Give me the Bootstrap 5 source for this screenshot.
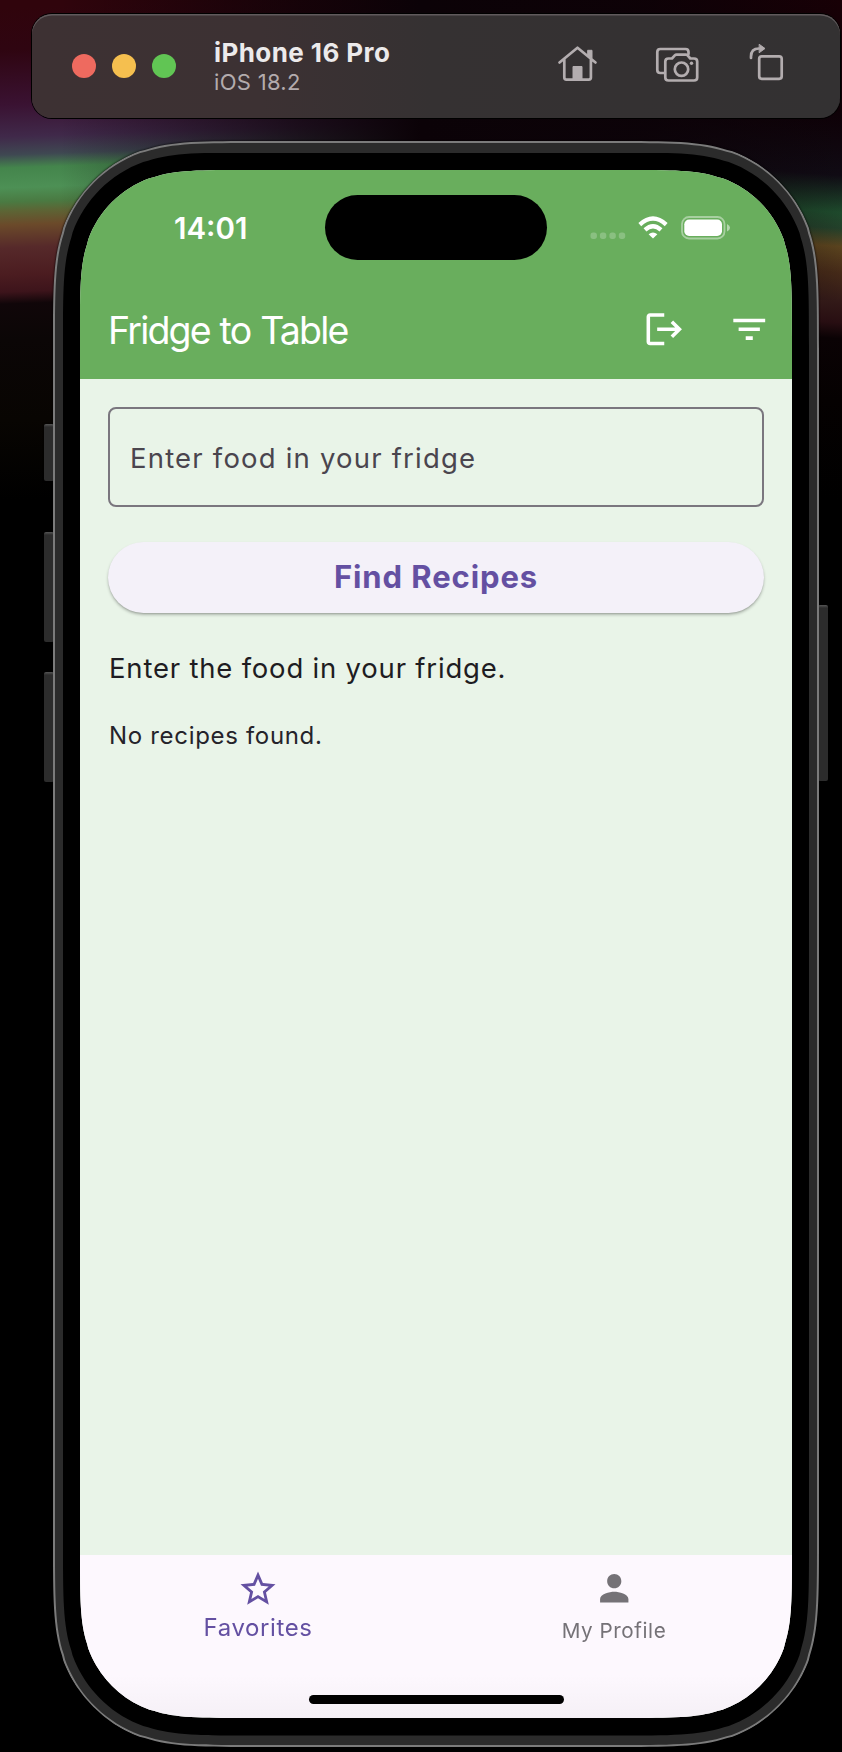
<!DOCTYPE html>
<html lang="en">
<head>
<meta charset="utf-8">
<meta name="viewport" content="width=device-width, initial-scale=1">
<title>Fridge to Table</title>
<link href="https://cdn.jsdelivr.net/npm/bootstrap@5.3.0/dist/css/bootstrap.min.css" rel="stylesheet">
<style>
body{width:842px;height:1752px;overflow:hidden;font-family:Inter,sans-serif;position:relative;
 background:
  linear-gradient(to right,rgba(11,2,7,0) 60px,rgba(11,2,7,.7) 300px,#0b0207 421px) 0 0/421px 300px no-repeat,
  linear-gradient(to left,rgba(11,2,7,0) 0,rgba(11,2,7,.8) 200px,#0b0207 421px) 421px 0/421px 300px no-repeat,
  linear-gradient(178deg,#30040c 7px,#2f0511 50px,#3a1232 105px,#40294a 137px,#3f4852 155px,#44854c 168px,#4d9055 188px,#4a7a42 202px,#5c6535 211px,#6b4a2a 225px,#56292a 248px,#4b1c20 275px,#3d141b 292px,#100609 304px,#0b0606 340px,#080502 420px,#000 500px) 0 0/421px 500px no-repeat,
  linear-gradient(184deg,#180006 0,#0e0006 110px,#100b14 175px,#1e4a2c 212px,#23402a 228px,#5a431e 246px,#452a18 272px,#331a18 300px,#280e12 322px,#0a0204 338px,#050101 400px,#000 500px) 421px 0/421px 500px no-repeat,
  #000}
.sim-bar{width:808px;height:104px;margin:14px 0 0 32px;border-radius:20px;padding:0 54px 0 40px;
 background:linear-gradient(to right,#3d3133 0,#3c3133 230px,#353132 400px,#333132 100%);
 box-shadow:0 0 0 1px #000,inset 0 1.5px 0 #605a5c}
.light{width:24px;height:24px;border-radius:50%}
.l-close{background:#ee6a5f}.l-min{background:#f5bf4f}.l-max{background:#61c554}
.sim-text{margin-left:38px;padding-top:2px}
.sim-name{font-size:26px;line-height:30px;font-weight:700;color:#eceaeb;letter-spacing:.42px}
.sim-os{font-size:22px;line-height:28px;color:#b3abad;letter-spacing:.3px}
.device{width:766px;height:1606px;margin:23px 0 0 53px;position:relative;filter:drop-shadow(0 0 1px #000)}
.side-key{position:absolute;background:linear-gradient(#555 0,#2c2c2c 3px);width:10px;border-radius:2px}
.edge{background:#7b7b7b;padding:2px;position:relative;border-radius:137px}
.band{background:#2b2b2b;padding:9.5px 8px}
.bezel{background:#000;padding:17.5px 17px}
.app{width:712px;height:1548px;background:#e9f4e8}
.status{height:109px;padding:0 60px 0 94px}
.clock{font-size:29.5px;line-height:36px;font-weight:600;width:151px;margin-top:40px}
.island{width:222px;height:65.5px;border-radius:33px;background:#000;margin-top:24.5px}
.status-icons{margin-top:40px}
.top-green{background:#69ae5d;color:#fff;height:209px}
.appbar{height:100px;padding:0 21.5px 0 28px}
.app-title{font-size:37.5px;line-height:48px;letter-spacing:-1.8px;word-spacing:1px;font-weight:400;padding-top:3px}
.bar-icons{gap:42.5px}
.content{height:1176px;padding:28px 28px 0}
.food-input{height:100px;border:2px solid #7a767e;border-radius:8px;background:transparent;padding:1px 20px 0;font-size:27.5px;letter-spacing:1.2px;color:#4a454e}
.food-input::placeholder{color:#4a454e;opacity:1}
.find{height:71px;margin-top:35px;border-radius:36px;background:#f4f1f9;border:0;color:#6450a2;font-size:31px;font-weight:650;letter-spacing:.9px;padding:0 0 2px;line-height:66px;box-shadow:0 2px 3px rgba(0,0,0,.25),0 1px 1px rgba(0,0,0,.08)}
.hint{font-size:27.5px;line-height:40px;margin:35px 0 0 1px;letter-spacing:.8px;color:#1e1c22}
.none{font-size:24px;line-height:34px;margin:31px 0 0 1px;letter-spacing:.68px;color:#25232a}
.tabs{height:163px;background:linear-gradient(#fdf8fe 0,#fdf8fe 120px,#f5f0f6 100%);position:relative}
.tab-star{margin-top:12.500px}
.tab-person{margin-top:12px}
.tab-a{font-size:24px;line-height:30px;color:#6450a2;letter-spacing:.6px;margin-top:3px}
.tab-b{font-size:20.7px;line-height:30px;color:#757277;letter-spacing:.55px;margin-top:6px}
.home-line{position:absolute;left:228.5px;top:140px;width:255px;height:9px;border-radius:5px;background:#000}
svg{display:block;flex:none}
</style>
</head>
<body>
<header class="sim-bar d-flex align-items-center">
 <div class="d-flex gap-3">
  <span class="light l-close"></span><span class="light l-min"></span><span class="light l-max"></span>
 </div>
 <div class="sim-text me-auto">
  <div class="sim-name">iPhone 16 Pro</div>
  <div class="sim-os">iOS 18.2</div>
 </div>
 <svg width="236" height="50" viewBox="550 41 236 50" fill="none" stroke="#b3adaf" stroke-width="2.7" stroke-linejoin="round" stroke-linecap="round">
  <path d="M559.5 62.500 577.500 47.700 595.500 62.500M564.300 59.500V77.500Q564.300 79.600 566.400 79.600H588.800Q590.900 79.600 590.900 77.500V59.500"/>
  <path d="M573 80V66.500H582V80Z" fill="#b3adaf" stroke-width="1"/><path d="M588 50.300H592V58.500L588 55.500Z" fill="#b3adaf" stroke-width="1"/>
  <path d="M664 73H660.300Q657.300 73 657.300 70V52Q657.300 49 660.300 49H685.500Q688.500 49 688.500 52V54"/>
  <path d="M668.500 58.500H672L674.800 55.400Q675.500 54.600 676.600 54.600H685.800Q686.900 54.600 687.600 55.400L690.300 58.500H694Q697.200 58.500 697.200 61.500V77.500Q697.200 80.500 694 80.500H668.500Q665.300 80.500 665.300 77.500V61.500Q665.300 58.500 668.500 58.500Z"/>
  <circle cx="681.500" cy="69.200" r="6.700"/><circle cx="691.500" cy="63.300" r="1.700" fill="#b3adaf" stroke="none"/>
  <rect x="759.200" y="56.300" width="22.500" height="22.500" rx="2.500"/>
  <path d="M751 58V56.500Q751 48.500 759 48.500"/><path d="M759.500 44.500 765 48.500 759.500 52.500Z" fill="#b3adaf" stroke-width="1"/>
 </svg>
</header>

<main class="device">
 <span class="side-key" style="left:-9px;top:283px;height:57px"></span>
 <span class="side-key" style="left:-9px;top:391px;height:110px"></span>
 <span class="side-key" style="left:-9px;top:531px;height:110px"></span>
 <span class="side-key" style="left:765px;top:464px;height:176px"></span>
 <div class="edge" data-corner="137"><div class="band" data-corner="135"><div class="bezel" data-corner="127">
  <div class="app d-flex flex-column" data-corner="110">
   <div class="top-green">
    <div class="status d-flex align-items-start">
     <div class="clock">14:01</div>
     <div class="island"></div>
     <svg class="status-icons ms-auto" width="142" height="36" viewBox="590 210 142 36" fill="#fff">
      <g opacity=".22"><rect x="590.500" y="232.500" width="6.400" height="6.400" rx="2.600"/><rect x="599.900" y="232.500" width="6.400" height="6.400" rx="2.600"/><rect x="609.400" y="232.500" width="6.400" height="6.400" rx="2.600"/><rect x="618.800" y="232.500" width="6.400" height="6.400" rx="2.600"/></g>
      <g fill="none" stroke="#fff" stroke-width="4.200"><path d="M639.800 224.600Q653 212.500 666.200 224.600"/><path d="M645 229.900Q653 222.500 661 229.900"/></g>
      <path d="M648.600 234.300Q653 230.600 657.400 234.300L653 238.600Z"/>
      <rect x="682" y="217" width="42.500" height="21.500" rx="7" fill="none" stroke="#fff" stroke-opacity=".42" stroke-width="1.800"/>
      <rect x="684.300" y="219.500" width="37.700" height="16.500" rx="4.800"/><path d="M727 224Q730 225.500 730 227.700T727 231.500Z" opacity=".5"/>
     </svg>
    </div>
    <div class="appbar d-flex align-items-center">
     <div class="app-title">Fridge to Table</div>
     <div class="bar-icons ms-auto d-flex">
      <svg width="42.500" height="42.500" viewBox="0 0 24 24" fill="#fff"><path d="M17 7l-1.410 1.410L18.170 11H8v2h10.170l-2.580 2.580L17 17l5-5zM4 5h8V3H4c-1.100 0-2 .9-2 2v14c0 1.100.9 2 2 2h8v-2H4V5z"/></svg>
      <svg width="42.500" height="42.500" viewBox="0 0 24 24" fill="#fff"><path d="M10 18h4v-2h-4v2zM3 6v2h18V6H3zm3 7h12v-2H6v2z"/></svg>
     </div>
    </div>
   </div>
   <div class="content d-flex flex-column">
    <input class="food-input w-100" placeholder="Enter food in your fridge">
    <button class="btn find w-100">Find Recipes</button>
    <div class="hint">Enter the food in your fridge.</div>
    <div class="none">No recipes found.</div>
   </div>
   <nav class="tabs d-flex text-center">
    <div class="w-50 d-flex flex-column align-items-center">
     <svg class="tab-star" width="42" height="42" viewBox="0 0 24 24" fill="#6450a2"><path d="M22 9.240l-7.190-.62L12 2 9.190 8.630 2 9.240l5.460 4.730L5.820 21 12 17.270 18.180 21l-1.630-7.030L22 9.240zM12 15.400l-3.760 2.270 1-4.280-3.320-2.880 4.380-.38L12 6.100l1.710 4.040 4.380.38-3.320 2.880 1 4.280L12 15.400z"/></svg>
     <div class="tab-a">Favorites</div>
    </div>
    <div class="w-50 d-flex flex-column align-items-center">
     <svg class="tab-person" width="42.500" height="42.500" viewBox="0 0 24 24" fill="#757277"><path d="M12 12c2.210 0 4-1.790 4-4s-1.790-4-4-4-4 1.790-4 4 1.790 4 4 4zm0 2c-2.670 0-8 1.340-8 4v2h16v-2c0-2.660-5.330-4-8-4z"/></svg>
     <div class="tab-b">My Profile</div>
    </div>
    <span class="home-line"></span>
   </nav>
  </div>
 </div></div></div>
</main>
<script src="https://cdn.jsdelivr.net/npm/bootstrap@5.3.0/dist/js/bootstrap.bundle.min.js"></script>
<script>
// Continuous-curvature corners for the nested phone layers
document.querySelectorAll('[data-corner]').forEach(function (el) {
  var r = +el.dataset.corner, w = el.offsetWidth, h = el.offsetHeight;
  var a = 1.528665 * r, b = 1.088493 * r, c = 0.868407 * r, m = 0.669934 * r, n = 0.065496 * r,
      d = 0.631494 * r, e = 0.074911 * r, f = 0.372824 * r, g = 0.16906 * r;
  el.style.clipPath = 'path("' + [
    'M', a, 0, 'L', w - a, 0, 'C', w - b, 0, w - c, 0, w - m, n, 'L', w - d, e, 'C', w - f, g, w - g, f, w - e, d, 'L', w - n, m, 'C', w, c, w, b, w, a,
    'L', w, h - a, 'C', w, h - b, w, h - c, w - n, h - m, 'L', w - e, h - d, 'C', w - g, h - f, w - f, h - g, w - d, h - e, 'L', w - m, h - n, 'C', w - c, h, w - b, h, w - a, h,
    'L', a, h, 'C', b, h, c, h, m, h - n, 'L', d, h - e, 'C', f, h - g, g, h - f, e, h - d, 'L', n, h - m, 'C', 0, h - c, 0, h - b, 0, h - a,
    'L', 0, a, 'C', 0, b, 0, c, n, m, 'L', e, d, 'C', g, f, f, g, d, e, 'L', m, n, 'C', c, 0, b, 0, a, 0, 'Z'].join(' ') + '")';
});
</script>
</body>
</html>
